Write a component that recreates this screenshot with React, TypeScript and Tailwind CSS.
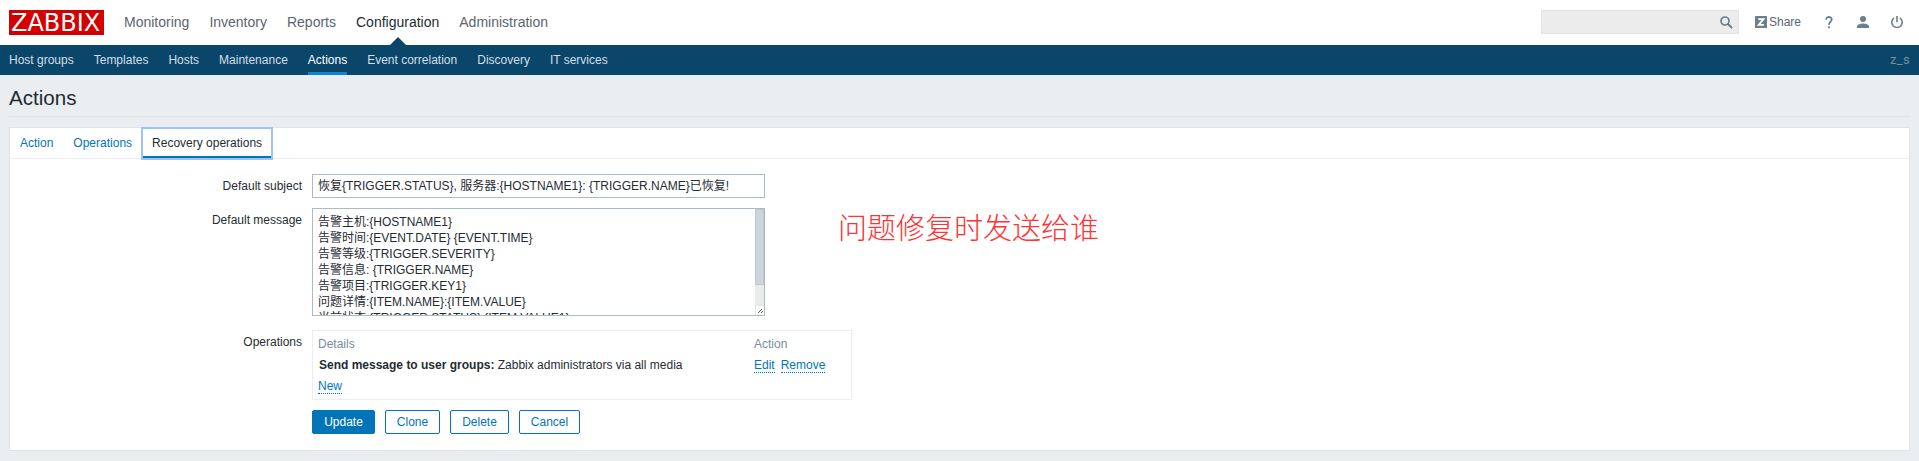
import React from "react";

const mainMenu = ["Monitoring", "Inventory", "Reports", "Configuration", "Administration"];
const subMenu = ["Host groups", "Templates", "Hosts", "Maintenance", "Actions", "Event correlation", "Discovery", "IT services"];
const message = [
  "告警主机:{HOSTNAME1}",
  "告警时间:{EVENT.DATE} {EVENT.TIME}",
  "告警等级:{TRIGGER.SEVERITY}",
  "告警信息: {TRIGGER.NAME}",
  "告警项目:{TRIGGER.KEY1}",
  "问题详情:{ITEM.NAME}:{ITEM.VALUE}",
  "当前状态:{TRIGGER.STATUS}:{ITEM.VALUE1}",
];

function Header() {
  return (
    <header className="flex h-[45px] items-start bg-white pl-[9px] pr-4">
      <div className="mt-[10px] h-[25px] w-[95px] whitespace-nowrap bg-[#d40000] pl-[2px] font-['DejaVu_Sans',sans-serif] text-[24px] leading-[27px] text-white">ZABBIX</div>
      <nav className="ml-5 flex gap-5 text-[14px] leading-[45px] text-[#5a656e]">
        {mainMenu.map((m) => (
          <a key={m} className={m === "Configuration" ? "relative text-[#1f2c33]" : ""}>
            {m}
            {m === "Configuration" && (
              <svg className="absolute bottom-0 left-1/2 -ml-2" width="16" height="8" viewBox="0 0 16 8">
                <path d="M0 8 8 0l8 8z" fill="#0a466a" />
              </svg>
            )}
          </a>
        ))}
      </nav>
      <div className="ml-auto flex h-[45px] items-center">
        <div className="-mt-px flex h-6 w-[198px] items-center justify-end border border-[#dfe4e7] bg-[#ececec] pr-[5px]">
          <svg width="13" height="13" viewBox="0 0 13 13" fill="none" stroke="#6c7f8c">
            <circle cx="5" cy="5" r="4" strokeWidth="1.7" />
            <path d="m7.800 7.800 4.200 4.200" strokeWidth="2" />
          </svg>
        </div>
        <svg className="-mt-px ml-4" width="12" height="12" viewBox="0 0 12 12">
          <rect width="12" height="12" rx="0.5" fill="#6c7f8c" />
          <path d="M3.300 3.200h5.200L3.700 8.800h5.200" fill="none" stroke="#fff" strokeWidth="1.800" />
        </svg>
        <span className="-mt-px ml-[2px] w-8 text-[12px] text-[#5a656e]">Share</span>
        <svg className="-mt-px ml-6" width="8" height="13" viewBox="0 0 8 13" fill="none" stroke="#6c7f8c" strokeWidth="1.800">
          <path d="M1.200 3.700C1.200 2 2.300 1 3.900 1s2.800.9 2.800 2.500C6.700 5.500 4 5.700 4 8.700" />
          <path d="M4 10.300v2" />
        </svg>
        <svg className="-mt-px ml-6" width="12" height="12" viewBox="0 0 12 12" fill="#6c7f8c">
          <circle cx="6" cy="3" r="3" />
          <path d="M0 12v-1.600C0 8.500 3.500 7.400 6 7.400s6 1.100 6 3V12z" />
        </svg>
        <svg className="-mt-px ml-[22px]" width="12" height="12" viewBox="0 0 12 12" fill="none" stroke="#6c7f8c" strokeWidth="1.600">
          <path d="M6 0v6.300M3.200 1.900a5.200 5.200 0 1 0 5.600 0" />
        </svg>
      </div>
    </header>
  );
}

function Link({ children }: { children: React.ReactNode }) {
  return <a className="h-[15px] border-b border-dotted border-[#0275b8] leading-[14px] text-[#0275b8]">{children}</a>;
}

function Label({ children }: { children: React.ReactNode }) {
  return <div className="w-[292px] shrink-0 pt-[5px] text-right leading-[14px]">{children}</div>;
}

export default function App() {
  return (
    <div className="h-[461px] overflow-hidden bg-[#ebeef0] font-['Liberation_Sans','Noto_Sans_CJK_SC',sans-serif] text-[12px] text-[#1f2c33]">
      <Header />
      <nav className="flex h-[30px] gap-5 bg-[#0a466a] px-[9px] leading-[30px] text-[#d3dfe6]">
        {subMenu.map((m) => (
          <a key={m} className={m === "Actions" ? "border-b-3 border-[#0f85cd] text-white" : ""}>{m}</a>
        ))}
        <span className="ml-auto font-['Roboto',sans-serif] text-[13px] tracking-[0.3px] text-[#768d99]">z_s</span>
      </nav>
      <main className="px-[9px]">
        <h1 className="h-[42px] border-b border-[#dfe4e7] text-[20.6px] leading-[46px]">Actions</h1>
        <section className="relative mt-[10px] h-[324px] border border-[#dfe4e7] bg-white">
          <div className="flex h-[31px] border-b border-[#ebeef0] leading-[30px] text-[#0275b8]">
            <a className="px-[10px]">Action</a>
            <a className="px-[10px]">Operations</a>
            <a className="h-[31px] border-b-3 border-[#0275b8] px-[10px] text-[#1f2c33] outline-2 -outline-offset-1 outline-[#9fc1fb]">Recovery operations</a>
          </div>
          <div className="flex pt-[15px]">
            <Label>Default subject</Label>
            <div className="ml-[10px] h-6 w-[453px] border border-[#acbbc2] pl-[5px] leading-[23px]">恢复{"{TRIGGER.STATUS}"}, 服务器:{"{HOSTNAME1}"}: {"{TRIGGER.NAME}"}已恢复!</div>
          </div>
          <div className="mt-[10px] flex">
            <Label>Default message</Label>
            <div className="ml-[10px] flex h-[108px] w-[453px] overflow-hidden border border-[#acbbc2]">
              <div className="flex-1 pl-[5px] pt-[5px]">
                {message.map((l) => (
                  <div key={l} className="h-4 whitespace-nowrap leading-4">{l}</div>
                ))}
              </div>
              <div className="flex w-[9px] flex-col bg-[#ebebeb]">
                <div className="h-[76px] border border-[#bdc9cf] bg-[#ccd5d9]" />
                <svg className="mt-auto" width="9" height="10" viewBox="0 0 9 10">
                  <path d="M0 0h9v10H0z" fill="#fff" />
                  <path d="M0 .5h9M.5 0v10" stroke="#dfe4e7" />
                  <path d="M3 7h1v1H3zM4 6h1v1H4zM5 5h1v1H5zM6 4h1v1H6zM6 7h1v1H6zM7 6h1v1H7z" fill="#555" />
                </svg>
              </div>
            </div>
          </div>
          <div className="mt-[14px] flex">
            <Label>Operations</Label>
            <div className="ml-[10px] h-[70px] w-[540px] border border-[#ebeef0] px-[5px]">
              <div className="flex h-[23px] items-center pt-[3px] text-[#768d99]">
                <span className="w-[436px]">Details</span>
                <span>Action</span>
              </div>
              <div className="flex h-[21px] items-center">
                <span className="w-[436px] pl-px"><b>Send message to user groups:</b> Zabbix administrators via all media</span>
                <div className="flex gap-[6px] pt-px">
                  <Link>Edit</Link>
                  <Link>Remove</Link>
                </div>
              </div>
              <div className="flex h-[21px] items-center pt-px"><Link>New</Link></div>
            </div>
          </div>
          <div className="ml-[302px] mt-[10px] flex gap-[10px] leading-[22px] text-[#0275b8]">
            <button className="w-[63px] rounded-xs border border-[#0275b8] bg-[#0275b8] text-white">Update</button>
            <button className="w-[55px] rounded-xs border border-[#0275b8]">Clone</button>
            <button className="w-[59px] rounded-xs border border-[#0275b8]">Delete</button>
            <button className="w-[61px] rounded-xs border border-[#0275b8]">Cancel</button>
          </div>
          <div className="absolute left-[828px] top-[80px] text-[29px] font-light leading-[42px] text-[#ff3333]">问题修复时发送给谁</div>
        </section>
      </main>
    </div>
  );
}
